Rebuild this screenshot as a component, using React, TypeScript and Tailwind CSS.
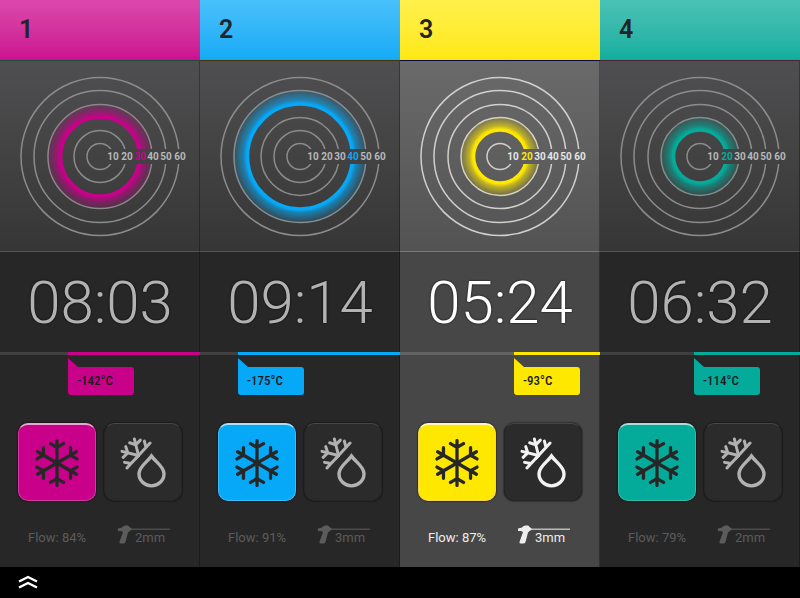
type ZoneData = {
  id: number;
  ring: number;
  time: string;
  temp: string;
  flow: number;
  size: number;
  active: boolean;
  color: string;
  header: string;
  track: string;
  bubble: string;
  tail: string;
  button: string;
};

const zones: ZoneData[] = [
  {
    id: 1, ring: 30, time: '08:03', temp: '-142°C', flow: 84, size: 2, active: false, color: '#c9008a',
    header: 'from-[#da48ab] to-[#cb0f90] border-[#1f4a38]', track: 'w-[66%] bg-[#c9008a]',
    bubble: 'ml-[34%] bg-[#c9008a]', tail: 'fill-[#c9008a]',
    button: 'bg-[#c9008a] border-[#d23aa4] border-t-[#eba6d6]',
  },
  {
    id: 2, ring: 40, time: '09:14', temp: '-175°C', flow: 91, size: 3, active: false, color: '#05a9f8',
    header: 'from-[#48c0fa] to-[#10abf6] border-[#4a3208]', track: 'w-[81%] bg-[#05a9f8]',
    bubble: 'ml-[19%] bg-[#05a9f8]', tail: 'fill-[#05a9f8]',
    button: 'bg-[#05a9f8] border-[#3cbcf8] border-t-[#a8e0fc]',
  },
  {
    id: 3, ring: 20, time: '05:24', temp: '-93°C', flow: 87, size: 3, active: true, color: '#ffe800',
    header: 'from-[#fff04a] to-[#fee80c] border-[#0a0a4a]', track: 'w-[43%] bg-[#ffe800]',
    bubble: 'ml-[57%] bg-[#ffe800]', tail: 'fill-[#ffe800]',
    button: 'bg-[#ffe800] border-[#f3d64c] border-t-[#fff6b8]',
  },
  {
    id: 4, ring: 20, time: '06:32', temp: '-114°C', flow: 79, size: 2, active: false, color: '#04ab9a',
    header: 'from-[#4ac2b6] to-[#0eae9e] border-[#4a2430]', track: 'w-[53%] bg-[#04ab9a]',
    bubble: 'ml-[47%] bg-[#04ab9a]', tail: 'fill-[#04ab9a]',
    button: 'bg-[#04ab9a] border-[#36bcae] border-t-[#a2e0d8]',
  },
];

const rings = [
  { value: 10, r: 13, x: 113 },
  { value: 20, r: 26, x: 127 },
  { value: 30, r: 39, x: 140 },
  { value: 40, r: 52, x: 153 },
  { value: 50, r: 66, x: 166 },
  { value: 60, r: 79, x: 180 },
];

// Thin dark seam along the right side of a column
const seam = "relative after:absolute after:inset-y-0 after:right-0 after:w-px after:bg-black/30 after:content-['']";

function Gauge({ zone }: { zone: ZoneData }) {
  const index = rings.findIndex((ring) => ring.value === zone.ring);
  const inner = rings[index].r - 1.3;
  const outer = rings[index + 1].r;
  const at = (r: number) => r / outer;
  const line = zone.active ? '#d2d0cc' : '#8c8c8c';
  return (
    <svg viewBox="0 0 200 190" className="block h-[190px] w-[200px]" role="img" aria-label={`Level ${zone.ring}`}>
      <defs>
        <radialGradient id={`glow${zone.id}`} gradientUnits="userSpaceOnUse" cx="100" cy="95.5" r={outer}>
          <stop offset={at(inner)} stopColor={zone.color} />
          <stop offset={at(inner + 2.5)} stopColor={zone.color} />
          <stop offset={at(inner + 6)} stopColor={zone.color} stopOpacity="0.6" />
          <stop offset="1" stopColor={zone.color} stopOpacity="0.12" />
        </radialGradient>
        <mask id={`gap${zone.id}`}>
          <rect width="200" height="190" fill="#fff" />
          <rect x="104" y="88" width="90" height="15" fill="#000" />
        </mask>
      </defs>
      <g fill="none" mask={`url(#gap${zone.id})`}>
        {rings.filter((ring) => ring.value !== zone.ring).map((ring) => (
          <circle key={ring.value} cx="100" cy="95.5" r={ring.r} stroke={line} strokeWidth="1.5" />
        ))}
        <circle cx="100" cy="95.5" r={(inner + outer) / 2} stroke={`url(#glow${zone.id})`} strokeWidth={outer - inner} />
      </g>
      <g fontSize="10" fontWeight="700" textAnchor="middle">
        {rings.map((ring) => (
          <text key={ring.value} x={ring.x} y="99" fill={ring.value === zone.ring ? zone.color : zone.active ? '#e6e6e6' : '#b8b8b8'}>
            {ring.value}
          </text>
        ))}
      </g>
    </svg>
  );
}

function Snowflake() {
  return (
    <svg viewBox="-24 -24 48 48" className="size-12" fill="none" stroke="#272727" strokeWidth="3.3" strokeLinecap="round">
      {[0, 60, 120, 180, 240, 300].map((angle) => (
        <path key={angle} transform={`rotate(${angle})`} d="M0 0V-22.4M-6.5 -19.4L0 -15.600L6.5 -19.4" />
      ))}
    </svg>
  );
}

function Thaw() {
  return (
    <svg viewBox="0 0 50 54" className="h-[54px] w-[50px]" fill="none" stroke="currentColor" strokeWidth="3.4" strokeLinecap="round">
      <g transform="translate(20.5 20.5)" strokeWidth="3">
        <path transform="rotate(43)" d="M0 4V-17M-5.500 -14.500L0 -11" />
        <path transform="rotate(-14)" d="M0 0V-17M-5.500 -14.500L0 -11L5.500 -14.500" />
        <path transform="rotate(-76)" d="M0 0V-17M-5.500 -14.500L0 -11L5.500 -14.500" />
        <path transform="rotate(-137)" d="M0 0V-17M5.500 -14.500L0 -11" />
      </g>
      <path d="M33.500 21C29.500 27 21 31.500 21 38.700A12.500 12.200 0 0 0 46 38.700C46 31.500 37.500 27 33.500 21Z" />
    </svg>
  );
}

function Drill() {
  return (
    <svg viewBox="0 0 54 20" className="absolute top-0 left-0 h-5 w-[54px]" fill="currentColor">
      <path d="M1 3.500L5 2.500Q6 .5 9 .5H11Q12 .5 12.500 2L14.500 3.500V5L12.500 6L11 7.500L8.500 17Q8 18.500 6.500 18.500H4Q2 18.500 2.500 17L6 7L4 6H1Z" />
      <path d="M13 3.500H53V5H13Z" opacity="0.7" />
    </svg>
  );
}

function Zone({ zone }: { zone: ZoneData }) {
  const on = zone.active;
  return (
    <section className={`flex min-w-0 flex-1 flex-col ${on ? 'bg-[#474747]' : 'bg-[#272727]'}`}>
      <header className={`h-[61px] border-b bg-linear-to-b px-[19px] pt-4 ${zone.header}`}>
        <h2 className="text-[25px] leading-7 font-semibold text-[#222428]">{zone.id}</h2>
      </header>
      <div className={seam}>
        <div className={`flex justify-center border-b bg-linear-to-b ${on ? 'border-[#777777] from-[#6a6a6a] to-[#535353]' : 'border-[#545454] from-[#4f4f51] to-[#363636]'}`}>
          <Gauge zone={zone} />
        </div>
        <div className={`flex h-[100px] items-center justify-center pt-0.5 text-[60px] leading-none font-light [text-shadow:0_0_2px_#000000] ${on ? 'text-white' : 'text-[#b2b2b2]'}`}>
          <time>{zone.time}</time>
        </div>
      </div>
      <div className={`flex h-[3px] justify-end ${on ? 'bg-[#636363]' : 'bg-[#404040]'}`}>
        <div className={zone.track} />
      </div>
      <div className={`flex grow flex-col pb-4 ${seam}`}>
        <div className={`relative mt-3 flex h-7 w-[66px] items-center rounded-[3px] pl-[9px] font-['Roboto_Condensed','Liberation_Sans_Narrow',Roboto,sans-serif] text-[13px] font-medium text-[#1c1c1c] ${zone.bubble}`}>
          <svg viewBox="0 0 12 14" className={`absolute -top-[9px] left-0 h-[14px] w-3 ${zone.tail}`}>
            <path d="M0 0L10 9L12 14H0Z" />
          </svg>
          {zone.temp}
        </div>
        <div className="mt-7 flex justify-center gap-2">
          <button aria-label="Freeze" className={`flex size-[78px] items-center justify-center rounded-[10px] border border-t-2 shadow-[0_0_2px_#000000] ${zone.button}`}>
            <Snowflake />
          </button>
          <button aria-label="Thaw" className={`flex size-[78px] items-center justify-center rounded-[10px] border border-[#262626] bg-[#2b2b2b] shadow-[0_0_2px_#000000] ${on ? 'border-t-[#444444] text-[#f2f2f2]' : 'border-t-[#434747] text-[#b2b2b2]'}`}>
            <Thaw />
          </button>
        </div>
        <div className={`mt-6 flex justify-between pr-[29px] pl-7 text-[13px] leading-[26px] ${on ? 'text-[#eeeeee]' : 'text-[#5c5c5c]'}`}>
          <span>Flow: {zone.flow}%</span>
          <span className="relative w-[54px] pl-[18px]">
            <Drill />
            {zone.size}mm
          </span>
        </div>
      </div>
    </section>
  );
}

export default function App() {
  return (
    <div className="flex min-h-screen flex-col bg-black font-[Roboto,sans-serif]">
      <main className="flex">
        {zones.map((zone) => (
          <Zone key={zone.id} zone={zone} />
        ))}
      </main>
      <footer className="flex grow items-center px-[18px]">
        <button aria-label="Expand" className="text-white">
          <svg viewBox="0 0 20 16" className="h-4 w-5" fill="none" stroke="currentColor" strokeWidth="2.4">
            <path d="M1 6.500L10 2L19 6.500M1 12.500L10 8L19 12.500" />
          </svg>
        </button>
      </footer>
    </div>
  );
}
